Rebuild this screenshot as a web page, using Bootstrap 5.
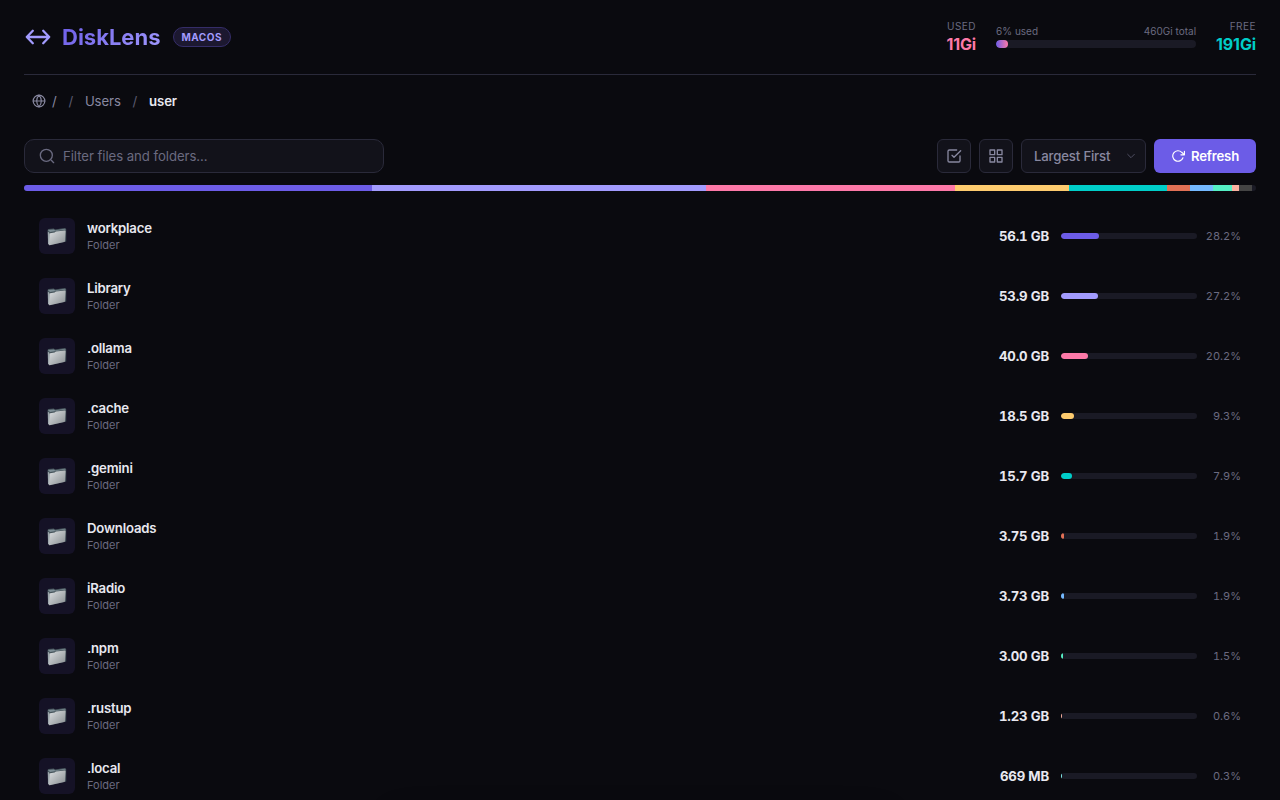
<!DOCTYPE html>
<html lang="en" data-bs-theme="dark">
<head>
<meta charset="utf-8">
<meta name="viewport" content="width=device-width, initial-scale=1">
<title>DiskLens</title>
<link href="https://cdn.jsdelivr.net/npm/bootstrap@5.3.0/dist/css/bootstrap.min.css" rel="stylesheet">
<style>
  body { background:#0a0a0f; color:#e8e8f0; font-family:Inter,sans-serif; font-size:13.2px; letter-spacing:-.1px; line-height:1.5; height:100vh; overflow:hidden; }
  button, input { letter-spacing:inherit; }
  svg { flex:none; fill:none; stroke:currentColor; stroke-width:2; stroke-linecap:round; stroke-linejoin:round; }
  .top-bar { height:75px; border-bottom:1px solid #2a2a3a; }
  .logo-icon { color:#a29bfe; stroke-width:2.3; }
  .brand-name { font-size:22px; font-weight:700; line-height:33px; letter-spacing:0; margin:0 12px 0 10px; background:linear-gradient(135deg,#6c5ce7,#a29bfe); -webkit-background-clip:text; background-clip:text; color:transparent; }
  .os-pill { font-size:10px; font-weight:700; line-height:12px; letter-spacing:.5px; color:#a29bfe; background:#1c1830; border:1px solid #352d68; padding:3px 8px; height:20px; border-radius:20px; }
  .stats { padding-bottom:2px; }
  .stat-label { font-size:10px; line-height:17px; color:#6a6a80; letter-spacing:.5px; }
  .stat-value { font-size:16px; line-height:19px; font-weight:700; letter-spacing:-.12px; }
  .pink { color:#fd79a8; } .teal { color:#00cec9; }
  .usage { width:200px; font-size:10px; line-height:14px; color:#6a6a80; letter-spacing:0; }
  .track { background:#1a1a25; overflow:hidden; }
  .usage .track { height:8px; border-radius:4px; margin:2px 0 1px; }
  .usage .track div { height:100%; border-radius:4px; background:linear-gradient(90deg,#6c5ce7,#fd79a8); }
  .crumbs { height:53px; padding-left:8px; gap:11.800px; color:#8888a0; }
  .crumbs svg { margin-top:-1px; }
  .crumbs .sep { color:#5a5a70; }
  .crumbs .here { color:#e8e8f0; font-weight:600; }
  .root { gap:6px; }
  .tools { margin-top:11px; height:34px; }
  .search-box { width:360px; border:1px solid #2a2a3a; border-radius:10px; background:#12121a; padding:0 14px; color:#6a6a80; }
  .search-box input { font-size:13.2px; margin-top:2px; letter-spacing:-.06px; color:#e8e8f0; outline:none; }
  .search-box input::placeholder { color:#6a6a80; opacity:1; }
  .tool-btn { width:34px; height:34px; border:1px solid #2a2a3a; border-radius:6px; background:#12121a; color:#8888a0; }
  .sort-box { width:125px; height:34px; border:1px solid #2a2a3a; border-radius:6px; background:#12121a; color:#8888a0; padding:0 9px 0 12px; font-weight:500; letter-spacing:-.18px; }
  .sort-box span, .refresh span { padding-top:2px; }
  .sort-box svg { color:#5a5a70; }
  .refresh { width:102px; height:34px; border-radius:6px; background:#6c5ce7; color:#fff; font-weight:600; border:0; gap:6px; letter-spacing:-.2px; }
  .share-bar { height:6px; margin-top:12px; border-radius:3px; }
  .entries { padding-top:15px; }
  .entry { height:60px; padding:0 15px; }
  .tile { width:36px; height:36px; border-radius:6px; background:#151226; }
  .tile svg { stroke:none; }
  .entry-name { font-weight:600; line-height:17px; letter-spacing:-.2px; }
  .entry-kind { font-size:11px; line-height:16px; color:#6a6a80; letter-spacing:0; }
  .entry-size { font-weight:700; padding-top:2px; letter-spacing:-.18px; margin-right:12px; font-variant-numeric:tabular-nums; }
  .entry .track { width:136px; height:6px; border-radius:3px; }
  .entry .track div { height:100%; border-radius:3px; }
  .entry-pct { width:44px; font-size:11px; color:#6a6a80; text-align:right; letter-spacing:0; font-variant-numeric:tabular-nums; }
  .action-bar { left:400px; width:480px; height:60px; bottom:-76px; border-radius:12px; background:#12121a; box-shadow:0 8px 32px rgba(0,0,0,.5); }
</style>
</head>
<body>
<div class="px-4">
  <header class="top-bar d-flex align-items-center justify-content-between">
    <div class="d-flex align-items-center">
      <svg class="logo-icon" width="28" height="28" viewBox="0 0 28 28"><path d="M2.800 14h22.400M8.800 7.800L2.800 14l6 6.200M19.200 7.800l6 6.200-6 6.200"/></svg>
      <span class="brand-name">DiskLens</span>
      <span class="os-pill">MACOS</span>
    </div>
    <div class="stats d-flex align-items-center">
      <div class="text-end me-3 pe-1"><div class="stat-label">USED</div><div class="stat-value pink">11Gi</div></div>
      <div class="usage me-3">
        <div class="d-flex justify-content-between"><span>6% used</span><span>460Gi total</span></div>
        <div class="track"><div style="width:6%"></div></div>
      </div>
      <div class="text-end ps-1"><div class="stat-label">FREE</div><div class="stat-value teal">191Gi</div></div>
    </div>
  </header>

  <nav class="crumbs d-flex align-items-center">
    <span class="root d-flex align-items-center"><svg width="14" height="14" viewBox="0 0 24 24"><circle cx="12" cy="12" r="10"/><path d="M2 12h20M12 2a15.3 15.3 0 0 1 4 10 15.3 15.3 0 0 1-4 10 15.3 15.3 0 0 1-4-10 15.3 15.3 0 0 1 4-10z"/></svg>/</span>
    <span class="sep">/</span><span>Users</span><span class="sep">/</span><span class="here">user</span>
  </nav>

  <div class="tools d-flex justify-content-between">
    <label class="search-box d-flex align-items-center gap-2">
      <svg width="16" height="16" viewBox="0 0 24 24"><circle cx="11" cy="11" r="9"/><path d="M18.500 18.500L22 22"/></svg>
      <input class="border-0 bg-transparent p-0 flex-grow-1" type="text" placeholder="Filter files and folders...">
    </label>
    <div class="d-flex gap-2">
      <button class="tool-btn d-flex align-items-center justify-content-center p-0" aria-label="Select"><svg width="16" height="16" viewBox="0 0 24 24"><path d="M9 11l3 3L22 4M21 12v7a2 2 0 0 1-2 2H5a2 2 0 0 1-2-2V5a2 2 0 0 1 2-2h11"/></svg></button>
      <button class="tool-btn d-flex align-items-center justify-content-center p-0" aria-label="Grid"><svg width="16" height="16" viewBox="0 0 24 24"><path d="M3 3h7v7H3zM14 3h7v7h-7zM14 14h7v7h-7zM3 14h7v7H3z"/></svg></button>
      <button class="sort-box d-flex align-items-center justify-content-between"><span>Largest First</span><svg width="10" height="10" viewBox="0 0 24 24"><path d="M4 8l8 8 8-8"/></svg></button>
      <button class="refresh d-flex align-items-center justify-content-center p-0"><svg width="14" height="14" viewBox="0 0 24 24"><path d="M23 4v6h-6M20.49 15a9 9 0 1 1-2.12-9.36L23 10"/></svg><span>Refresh</span></button>
    </div>
  </div>

  <div class="share-bar track d-flex" id="share"></div>
  <main class="entries" id="entries"></main>
</div>
<div class="action-bar position-fixed"></div>

<svg width="0" height="0" class="position-absolute"><defs>
  <linearGradient id="front" x1="0" y1="0" x2="1" y2="1"><stop offset="0" stop-color="#dde0e2"/><stop offset="1" stop-color="#878c90"/></linearGradient>
  <symbol id="folder" viewBox="0 0 22 22">
    <path fill="#46545b" d="M1.600 5l.7-1 5.600-.4.8 1L18.800 3l1.400 1v12.500l-16 3.500-2-1z"/>
    <path fill="#7d8d95" d="M1.800 5l6.400-.5.8.9 10.500-1.600v.6L4 7z"/>
    <path fill="#9ea8ad" d="M1.800 6.600l1.500 1.200v12l-1.300-.9z"/>
    <path fill="url(#front)" d="M3.400 9q0-.7.8-.8l4.400-.6 1.300-1 9-1.100q.8 0 .7.8l-.6 9.700q0 .8-.8 1L3.700 20.200q-.8.2-.8-.6z"/>
  </symbol>
</defs></svg>

<script>
  // name, label, size in GB, percent of total, colour
  const entries = [
    ['workplace','56.1 GB',56.1,28.2,'#6c5ce7'], ['Library','53.9 GB',53.9,27.2,'#a29bfe'], ['.ollama','40.0 GB',40.05,20.2,'#fd79a8'],
    ['.cache','18.5 GB',18.45,9.3,'#fdcb6e'], ['.gemini','15.7 GB',15.7,7.9,'#00cec9'], ['Downloads','3.75 GB',3.75,1.9,'#e17055'],
    ['iRadio','3.73 GB',3.73,1.9,'#74b9ff'], ['.npm','3.00 GB',3,1.5,'#55efc4'], ['.rustup','1.23 GB',1.23,.6,'#fab1a0'], ['.local','669 MB',.65,.3,'#81ecec']
  ];
  const total = 198.6;
  const segment = (pct, color) => `<div style="width:${pct}%;background:${color}"></div>`;
  document.getElementById('share').innerHTML = entries.slice(0, 9).map(e => segment(e[2] / total * 100, e[4])).join('') + segment(1.03, '#444');
  document.getElementById('entries').innerHTML = entries.map(([name, label, gb, pct, color]) => `
    <div class="entry d-flex align-items-center">
      <div class="tile d-flex align-items-center justify-content-center me-2"><svg width="22" height="22"><use href="#folder"/></svg></div>
      <div class="ms-1 flex-grow-1"><div class="entry-name">${name}</div><div class="entry-kind">Folder</div></div>
      <div class="entry-size">${label}</div>
      <div class="track">${segment(pct, color)}</div>
      <div class="entry-pct">${pct.toFixed(1)}%</div>
    </div>`).join('');
</script>
<script src="https://cdn.jsdelivr.net/npm/bootstrap@5.3.0/dist/js/bootstrap.bundle.min.js"></script>
</body>
</html>
